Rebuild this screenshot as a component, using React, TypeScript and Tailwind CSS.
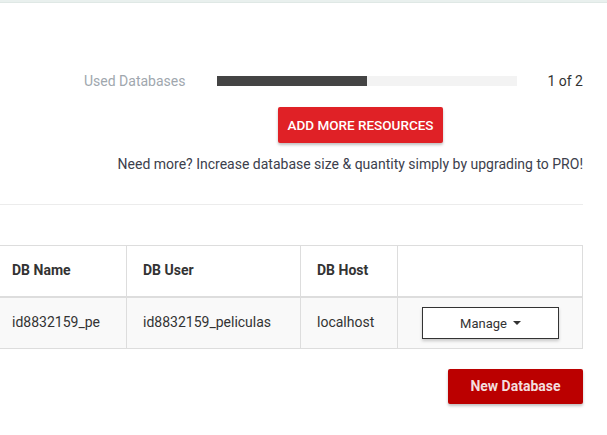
import React from "react";

export default function App() {
  return (
    <div
      className="w-[607px] h-[435px] bg-white overflow-hidden relative"
      style={{ fontFamily: "Roboto, 'Liberation Sans', sans-serif" }}
    >
      <div className="h-[3px] bg-[#e9f0ee] border-b border-[#dfe8e5]" />
      <div className="pr-[24px]">
        <div className="flex items-center h-[20px] mt-[68px] text-[14px]">
          <div className="w-[84px]" />
          <div className="text-[#a0a7ae] w-[133px]">Used Databases</div>
          <div className="w-[300px] h-[10px] bg-[#f3f3f3] flex">
            <div className="w-[150px] h-full bg-[#444444]" />
          </div>
          <div className="flex-1 text-right text-[#333]">1 of 2</div>
        </div>
        <div className="flex justify-center pl-[138px] mt-[16px]">
          <button className="w-[165px] h-[36px] bg-[#e02126] text-white text-[13.5px] font-medium uppercase rounded-[2px] shadow-[0_2px_3px_rgba(0,0,0,0.25)]">
            Add more resources
          </button>
        </div>
        <div className="text-right text-[14px] text-[#3c404c] mt-[11px] leading-[20px]">
          Need more? Increase database size &amp; quantity simply by upgrading to PRO!
        </div>
        <div className="h-px bg-[#ececec] mt-[30px]" />
        <table className="mt-[40px] ml-[-1px] w-[584px] border-collapse text-[14px] text-[#333]">
          <thead>
            <tr className="h-[51px]">
              <th className="w-[127px] border border-[#dddddd] border-b-2 text-left font-bold pl-[12px]">DB Name</th>
              <th className="w-[174px] border border-[#dddddd] border-b-2 text-left font-bold pl-[16px]">DB User</th>
              <th className="w-[97px] border border-[#dddddd] border-b-2 text-left font-bold pl-[16px]">DB Host</th>
              <th className="border border-[#dddddd] border-b-2" />
            </tr>
          </thead>
          <tbody>
            <tr className="h-[52px] bg-[#f9f9f9]">
              <td className="border border-[#dddddd] pl-[12px]">id8832159_pe</td>
              <td className="border border-[#dddddd] pl-[16px]">id8832159_peliculas</td>
              <td className="border border-[#dddddd] pl-[16px]">localhost</td>
              <td className="border border-[#dddddd] pl-[24px]">
                <button className="w-[137px] h-[32px] border border-[#333] bg-white text-[13px] text-[#333] flex items-center justify-center gap-[6px] shadow-[0_2px_3px_rgba(0,0,0,0.2)] mt-[1px]">
                  Manage
                  <span className="inline-block w-0 h-0 border-l-[4px] border-r-[4px] border-t-[4px] border-l-transparent border-r-transparent border-t-[#333]" />
                </button>
              </td>
            </tr>
          </tbody>
        </table>
        <div className="flex justify-end mt-[20px]">
          <button className="w-[135px] h-[35px] bg-[#bb0000] text-[#f3dede] text-[14px] font-bold rounded-[2px] shadow-[0_2px_3px_rgba(0,0,0,0.25)]">
            New Database
          </button>
        </div>
      </div>
    </div>
  );
}
